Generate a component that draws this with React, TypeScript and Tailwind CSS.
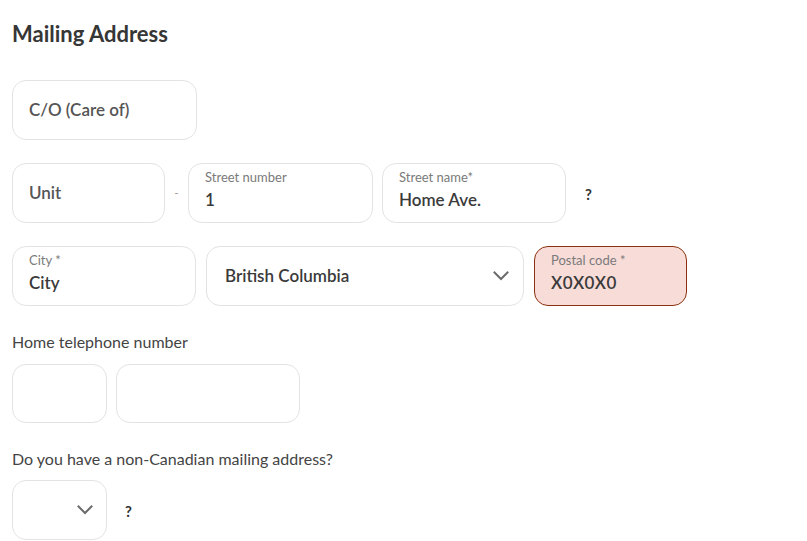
import React from 'react';

const box = 'h-[60px] rounded-[14px] border border-[#e3e3e3] bg-white';

function Chevron() {
  return (
    <svg width="16" height="10" viewBox="0 0 16 10" fill="none">
      <path d="M1.5 1.5 L8 8 L14.5 1.5" stroke="#6b6b6b" strokeWidth="2" strokeLinecap="square" />
    </svg>
  );
}

function Field({ label, value, width, className = '' }: { label?: string; value?: string; width: string; className?: string }) {
  return (
    <div className={`${box} ${width} ${className} flex flex-col justify-center px-4 pb-[6px]`}>
      {label && <div className="text-[13px] leading-[15px] text-[#7a7a7a] mb-[5px]">{label}</div>}
      {value && <div className="text-[17px] leading-[20px] font-semibold text-[#3a3a3a]">{value}</div>}
    </div>
  );
}

function Help() {
  return <span className="text-[15px] font-bold text-[#333]">?</span>;
}

export default function App() {
  return (
    <div className="min-h-screen bg-white px-3 pt-[20px] text-[#333]" style={{ fontFamily: 'Lato, "Noto Sans", sans-serif' }}>
      <h2 className="text-[22px] leading-[28px] font-bold text-[#363636]">Mailing Address</h2>

      <div className="mt-[32px]">
        <div className={`${box} w-[185px] flex items-center px-4`}>
          <span className="text-[17px] font-semibold text-[#555]">C/O (Care of)</span>
        </div>
      </div>

      <div className="mt-[23px] flex items-center">
        <div className={`${box} w-[153px] flex items-center px-4`}>
          <span className="text-[17px] font-semibold text-[#555]">Unit</span>
        </div>
        <span className="w-[23px] text-center text-[#999] text-[12px]">-</span>
        <Field label="Street number" value="1" width="w-[185px]" />
        <Field label="Street name*" value="Home Ave." width="w-[184px]" className="ml-[9px]" />
        <span className="ml-[19px] mt-[2px]"><Help /></span>
      </div>

      <div className="mt-[23px] flex items-center gap-[10px]">
        <Field label="City *" value="City" width="w-[184px]" />
        <div className={`${box} w-[318px] flex items-center justify-between pl-[18px] pr-[14px]`}>
          <span className="text-[17px] font-semibold text-[#3a3a3a]">British Columbia</span>
          <Chevron />
        </div>
        <div className="h-[60px] w-[153px] rounded-[14px] border border-[#8a3210] bg-[#f7dcd8] flex flex-col justify-center px-4 pb-[6px]">
          <div className="text-[13px] leading-[15px] text-[#7a7a7a] mb-[5px]">Postal code *</div>
          <div className="text-[17px] leading-[20px] font-semibold text-[#3a3a3a] tracking-wide">X0X0X0</div>
        </div>
      </div>

      <div className="mt-[26px] text-[16px] leading-[20px] text-[#444]">Home telephone number</div>
      <div className="mt-[12px] flex gap-[9px]">
        <div className="h-[59px] w-[95px] rounded-[14px] border border-[#e3e3e3]" />
        <div className="h-[59px] w-[184px] rounded-[14px] border border-[#e3e3e3]" />
      </div>

      <div className="mt-[26px] text-[16px] leading-[20px] text-[#444]">Do you have a non-Canadian mailing address?</div>
      <div className="mt-[11px] flex items-center">
        <div className="h-[60px] w-[95px] rounded-[14px] border border-[#e3e3e3] flex items-center justify-end pr-[13px]">
          <Chevron />
        </div>
        <span className="ml-[18px] mt-[2px]"><Help /></span>
      </div>
    </div>
  );
}
